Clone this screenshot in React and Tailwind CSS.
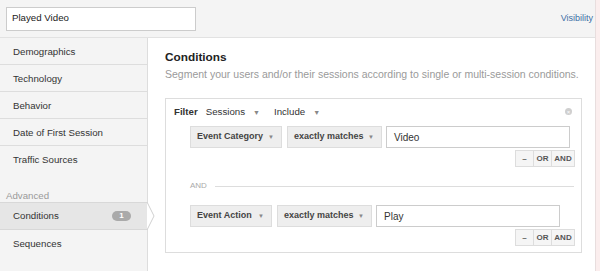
import React from "react";

const Caret = () => (
  <span className="ml-[8px] text-[7px] text-[#888] leading-none">▼</span>
);

function Dropdown({ label, w }) {
  return (
    <div
      className={`${w} h-[22px] bg-[#eeeeee] border border-[#dddddd] flex items-center justify-between pl-[6px] pr-[7px] text-[9px] font-bold text-[#444]`}
    >
      <span>{label}</span>
      <span className="text-[6px] text-[#888] font-normal">▼</span>
    </div>
  );
}

function Condition({ first, second, value, w1, w2 }) {
  return (
    <div className="flex flex-col">
      <div className="flex items-center pl-[24px]">
        <Dropdown label={first} w={w1} />
        <div className="w-[5px]" />
        <Dropdown label={second} w={w2} />
        <div className="w-[4px]" />
        <div className="w-[184px] h-[22px] border border-[#cccccc] bg-white flex items-center pl-[7px] text-[10px] text-[#333]">
          {value}
        </div>
      </div>
      <div className="flex justify-end pr-[6px] mt-[2px]">
        <div className="flex h-[17px] border border-[#dddddd] bg-[#f5f5f5] text-[8px] font-bold text-[#555]">
          <div className="w-[18px] flex items-center justify-center border-r border-[#dddddd]">–</div>
          <div className="w-[18px] flex items-center justify-center border-r border-[#dddddd]">OR</div>
          <div className="w-[22px] flex items-center justify-center">AND</div>
        </div>
      </div>
    </div>
  );
}

export default function App() {
  const items = ["Demographics", "Technology", "Behavior", "Date of First Session"];
  return (
    <div
      className="w-[600px] h-[271px] overflow-hidden flex bg-[#fbeeee]"
      style={{ fontFamily: '"Liberation Sans", Arial, sans-serif' }}
    >
      <div className="w-[596px] h-full flex flex-col bg-white border-r border-[#e8dede]">
        {/* top bar */}
        <div className="h-[38px] shrink-0 bg-[#f4f4f4] border-b border-[#e2e2e2] flex items-center justify-between pl-[6px] pr-[2px]">
          <div className="w-[190px] h-[24px] border border-[#cccccc] bg-white flex items-center pl-[5px] text-[9.7px] text-[#222]">
            Played Video
          </div>
          <div className="text-[9px] text-[#3d6fa6]">Visibility</div>
        </div>
        <div className="flex flex-1">
          {/* sidebar */}
          <div className="w-[148px] shrink-0 bg-[#f4f4f4] border-r border-[#dddddd] relative text-[9.7px] text-[#333]">
            {items.map((t) => (
              <div key={t} className="h-[27px] border-b border-[#dddddd] flex items-center pl-[13px] pt-[2px]">
                {t}
              </div>
            ))}
            <div className="h-[27px] flex items-center pl-[13px] pt-[2px]">Traffic Sources</div>
            <div className="h-[29px] flex items-end pl-[6px] pb-[1px] leading-[10px] text-[#9a9a9a]">Advanced</div>
            <div className="h-[28px] bg-[#e6e6e6] border-y border-[#d8d8d8] flex items-center justify-between pl-[13px] pr-[16px] relative">
              <span>Conditions</span>
              <span className="w-[19px] h-[10px] rounded-full bg-[#aaaaaa] text-white text-[8px] font-bold flex items-center justify-center">1</span>
              <svg className="absolute right-[-8px] top-[-1px]" width="8" height="28" viewBox="0 0 8 28">
                <polygon points="0,0 7,14 0,28" fill="#ffffff" />
                <polyline points="0,0 7,14 0,28" fill="none" stroke="#d0d0d0" strokeWidth="1" />
              </svg>
            </div>
            <div className="h-[27px] flex items-center pl-[13px] pt-[2px]">Sequences</div>
          </div>
          {/* main */}
          <div className="flex-1 pl-[17px] pt-[12px]">
            <div className="text-[11.8px] leading-[14px] font-bold text-[#222]">Conditions</div>
            <div className="mt-[4px] text-[10.5px] leading-[12px] text-[#9a9a9a] whitespace-nowrap">
              Segment your users and/or their sessions according to single or multi-session conditions.
            </div>
            <div className="mt-[18px] w-[417px] h-[155px] border border-[#dddddd] bg-white relative">
              <div className="flex items-center h-[12px] mt-[7px] pl-[8px] text-[9.7px] text-[#333]">
                <span className="font-bold">Filter</span>
                <span className="ml-[8px] flex items-center">Sessions<Caret /></span>
                <span className="ml-[14px] flex items-center">Include<Caret /></span>
              </div>
              <div className="absolute right-[9px] top-[9px] w-[7px] h-[7px] rounded-full bg-[#cfcfcf] flex items-center justify-center text-white text-[6px] leading-none">×</div>
              <div className="mt-[8px]">
                <Condition first="Event Category" second="exactly matches" value="Video" w1="w-[92px]" w2="w-[95px]" />
              </div>
              <div className="flex items-center pl-[24px] pr-[7px] mt-[13px] h-[12px]">
                <span className="text-[8px] text-[#aaaaaa]">AND</span>
                <div className="flex-1 h-px bg-[#dddddd] ml-[8px]" />
              </div>
              <div className="mt-[13px]">
                <Condition first="Event Action" second="exactly matches" value="Play" w1="w-[82px]" w2="w-[95px]" />
              </div>
            </div>
          </div>
        </div>
      </div>
    </div>
  );
}
